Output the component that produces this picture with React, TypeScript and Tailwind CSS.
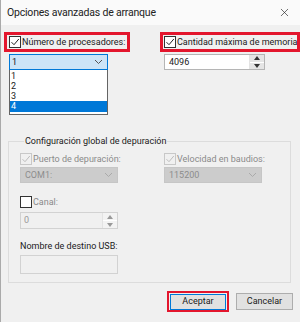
import { X } from "lucide-react";

const font = { fontFamily: 'Roboto, "Liberation Sans", sans-serif' };

const Check = ({ on, disabled }: { on?: boolean; disabled?: boolean }) => (
  <div
    className={`w-[12px] h-[12px] border flex items-center justify-center shrink-0 ${
      disabled ? "border-[#c8c8c8] bg-[#f0f0f0]" : "border-[#333] bg-white"
    }`}
  >
    {on && (
      <svg width="10" height="10" viewBox="0 0 10 10">
        <path d="M1.5 5.2 L4 7.7 L8.8 2" fill="none" stroke={disabled ? "#bdbdbd" : "#222"} strokeWidth="1" />
      </svg>
    )}
  </div>
);

const Spinner = ({ disabled }: { disabled?: boolean }) => (
  <div className="w-[15px] h-full flex flex-col border-l border-[#e3e3e3]">
    <div className={`flex-1 flex items-center justify-center ${disabled ? "bg-[#f3f3f3]" : "bg-[#e5e5e5]"} border-b border-[#fff]`}>
      <svg width="6" height="4" viewBox="0 0 6 4">
        <path d="M0 4 L3 0 L6 4 Z" fill={disabled ? "#999" : "#333"} />
      </svg>
    </div>
    <div className={`flex-1 flex items-center justify-center ${disabled ? "bg-[#f3f3f3]" : "bg-[#e5e5e5]"}`}>
      <svg width="6" height="4" viewBox="0 0 6 4">
        <path d="M0 0 L3 4 L6 0 Z" fill={disabled ? "#999" : "#333"} />
      </svg>
    </div>
  </div>
);

const Chevron = ({ color }: { color: string }) => (
  <svg width="9" height="6" viewBox="0 0 9 6">
    <path d="M1 1 L4.5 4.5 L8 1" fill="none" stroke={color} strokeWidth="1" />
  </svg>
);

export default function App() {
  return (
    <div className="w-[300px] h-[322px] bg-[#f0f0f0] overflow-hidden text-[9px] text-[#1a1a1a] border-l border-[#aaa]" style={font}>
      {/* title bar */}
      <div className="h-[25px] bg-[#fafafa] flex items-center justify-between pl-[6px] pr-[9px]">
        <span className="text-[10.5px] tracking-[-0.2px] text-[#222]">Opciones avanzadas de arranque</span>
        <X size={13} strokeWidth={1.2} className="text-[#222]" />
      </div>

      {/* top row */}
      <div className="relative flex pt-[7px]">
        <div className="w-[159px] flex flex-col">
          <div className="ml-[3px] w-[126px] h-[20px] border-[3px] border-[#e3162d] flex items-center gap-[1px] pl-[2px] whitespace-nowrap">
            <Check on />
            <span className="leading-none">Número de procesadores:</span>
          </div>
          <div className="ml-[8px] mt-[2px] w-[99px] h-[16px] bg-[#cce4f7] border border-[#0078d7] flex items-center justify-between pl-[2px] pr-[4px]">
            <span className="leading-none">1</span>
            <Chevron color="#555" />
          </div>
        </div>
        <div className="flex flex-col">
          <div className="w-[140px] h-[20px] border-[3px] border-[#e3162d] flex items-center gap-[1px] pl-[1px] whitespace-nowrap overflow-hidden">
            <Check on />
            <span className="leading-none">Cantidad máxima de memoria:</span>
          </div>
          <div className="ml-[4px] mt-[2px] w-[101px] h-[16px] bg-white border border-[#b5b5b5] flex items-center justify-between pl-[4px]">
            <span className="leading-none">4096</span>
            <Spinner />
          </div>
        </div>

        {/* open dropdown list */}
        <div className="absolute left-[8px] top-[45px] w-[99px] h-[45px] bg-white border border-[#646464] border-t-0 flex flex-col pt-[1px] z-10">
          <span className="h-[10px] leading-[10px] pl-[1px]">1</span>
          <span className="h-[10px] leading-[10px] pl-[1px]">2</span>
          <span className="h-[10px] leading-[10px] pl-[1px]">3</span>
          <span className="h-[11px] leading-[11px] pl-[1px] bg-[#0078d7] text-white">4</span>
        </div>
      </div>

      {/* group box */}
      <fieldset className="ml-[7px] mt-[67px] w-[283px] h-[146px] border border-[#dcdcdc] px-[11px]">
        <legend className="ml-[4px] px-[1px] text-[#1a1a1a] leading-none">Configuración global de depuración</legend>
        <div className="flex mt-[7px]">
          <div className="w-[144px] flex flex-col">
            <div className="flex items-center gap-[1px] h-[12px] whitespace-nowrap">
              <Check on disabled />
              <span className="text-[#8a8a8a] leading-none">Puerto de depuración:</span>
            </div>
            <div className="mt-[2px] w-[98px] h-[16px] bg-[#cccccc] border border-[#c6c6c6] flex items-center justify-between pl-[4px] pr-[4px]">
              <span className="text-[#8c8c8c] leading-none">COM1:</span>
              <Chevron color="#aaa" />
            </div>
          </div>
          <div className="flex flex-col">
            <div className="flex items-center gap-[1px] h-[12px] whitespace-nowrap">
              <Check on disabled />
              <span className="text-[#8a8a8a] leading-none">Velocidad en baudios:</span>
            </div>
            <div className="mt-[2px] w-[98px] h-[16px] bg-[#cccccc] border border-[#c6c6c6] flex items-center justify-between pl-[4px] pr-[4px]">
              <span className="text-[#8c8c8c] leading-none">115200</span>
              <Chevron color="#aaa" />
            </div>
          </div>
        </div>
        <div className="flex items-center gap-[1px] h-[12px] mt-[13px]">
          <Check />
          <span className="text-[#8a8a8a] leading-none">Canal:</span>
        </div>
        <div className="mt-[4px] w-[98px] h-[17px] bg-[#f0f0f0] border border-[#d2d2d2] flex items-center justify-between pl-[3px]">
          <span className="text-[#9a9a9a] leading-none">0</span>
          <Spinner disabled />
        </div>
        <div className="mt-[13px] leading-none">Nombre de destino USB:</div>
        <div className="mt-[4px] w-[98px] h-[19px] bg-[#f0f0f0] border border-[#d2d2d2]" />
      </fieldset>

      {/* buttons */}
      <div className="flex justify-end items-center gap-[7px] mt-[8px] pr-[7px]">
        <div className="w-[62px] h-[21px] border-[2px] border-[#e3162d] flex items-center justify-center">
          <button className="w-[56px] h-[16px] bg-[#e1e1e1] border border-[#0078d7] leading-none text-[#1a1a1a]">Aceptar</button>
        </div>
        <button className="w-[57px] h-[17px] bg-[#e1e1e1] border border-[#adadad] leading-none text-[#1a1a1a]">Cancelar</button>
      </div>
    </div>
  );
}
